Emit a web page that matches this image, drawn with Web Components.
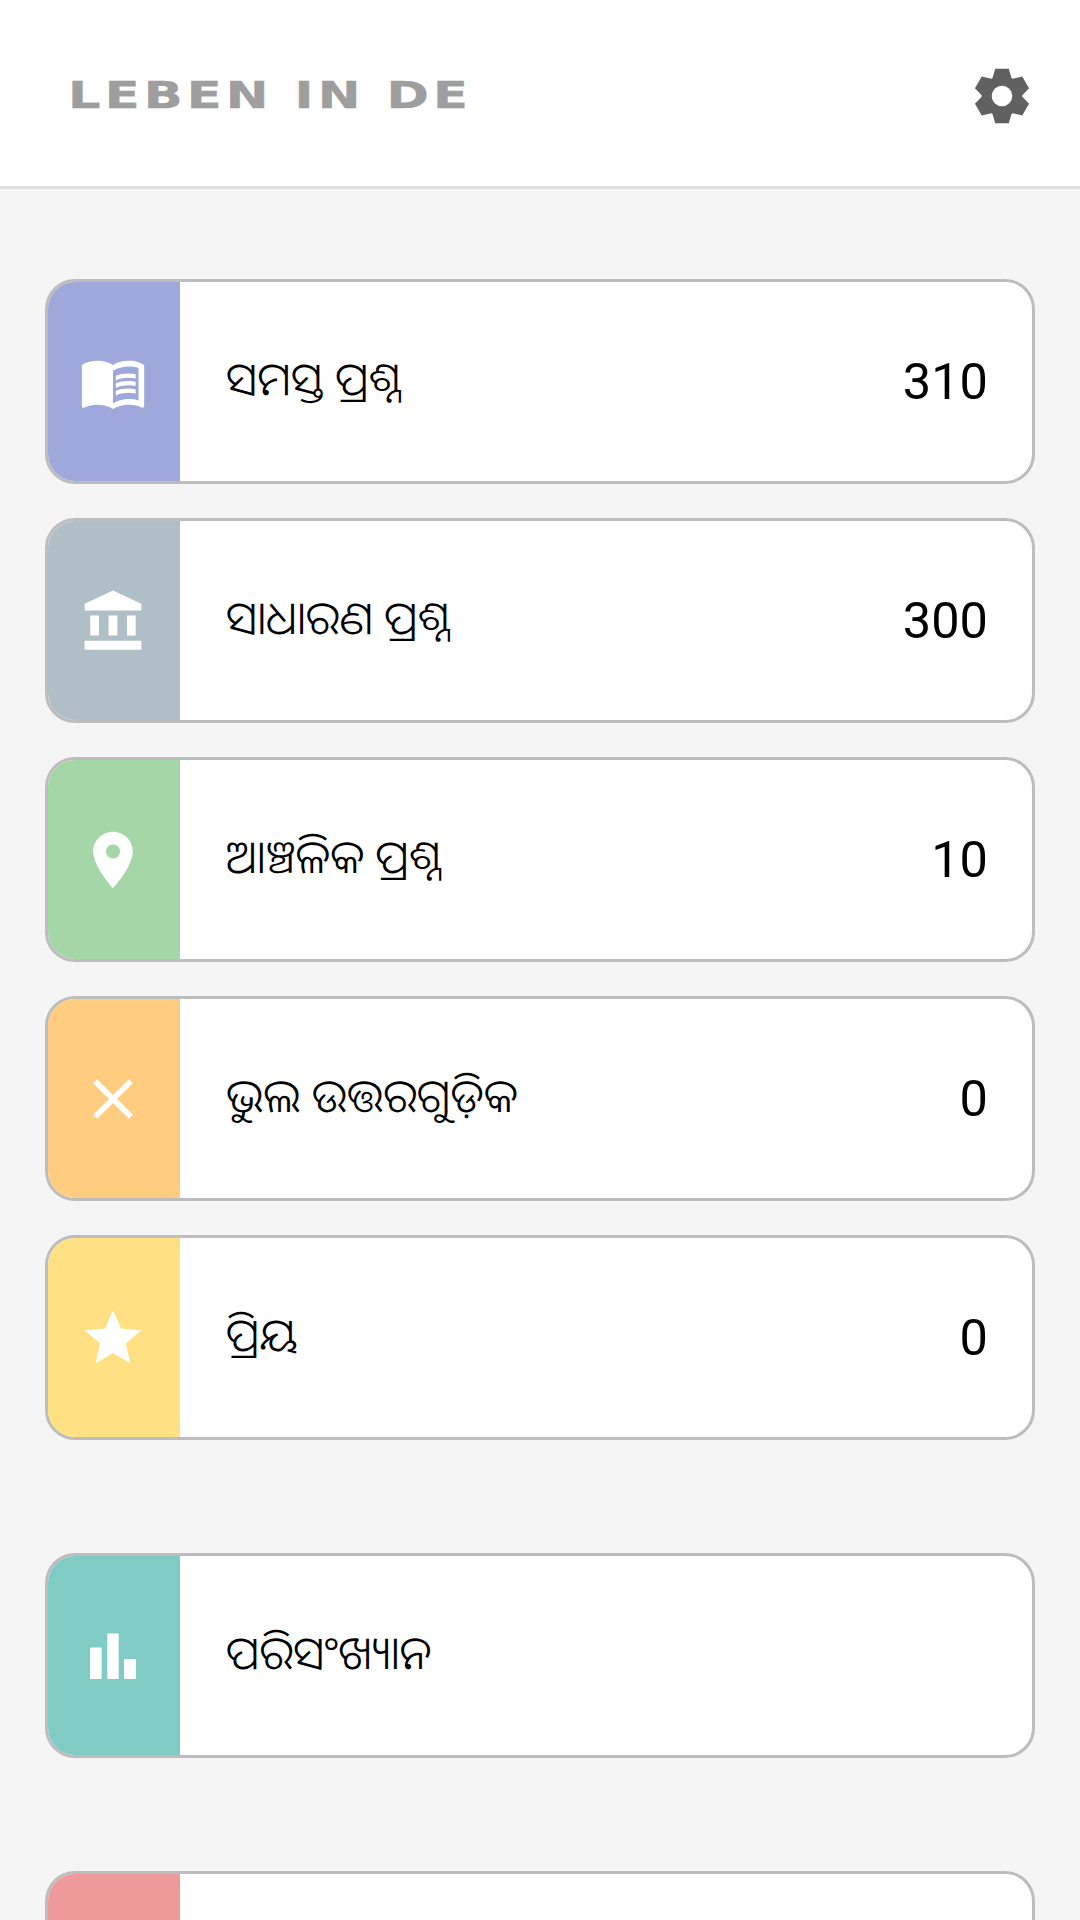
<!DOCTYPE html>
<html lang="or">
<head>
<meta charset="utf-8">
<title>Leben in DE</title>
<style>
  html, body { margin: 0; padding: 0; background: #f5f5f5; }
  body { font-family: Roboto, "Noto Sans", "Noto Sans Oriya", "Lohit Odia", sans-serif; height: 1920px; overflow: hidden; }
</style>
</head>
<body>
<app-header title="LEBEN IN DE"></app-header>
<menu-list>
  <menu-group>
    <menu-card color="#9fa8da" label="ସମସ୍ତ ପ୍ରଶ୍ନ" count="310"><menu-icon name="book"></menu-icon></menu-card>
    <menu-card color="#b0bec5" label="ସାଧାରଣ ପ୍ରଶ୍ନ" count="300"><menu-icon name="bank"></menu-icon></menu-card>
    <menu-card color="#a5d6a7" label="ଆଞ୍ଚଳିକ ପ୍ରଶ୍ନ" count="10"><menu-icon name="pin"></menu-icon></menu-card>
    <menu-card color="#ffcc80" label="ଭୁଲ ଉତ୍ତରଗୁଡ଼ିକ" count="0"><menu-icon name="close"></menu-icon></menu-card>
    <menu-card color="#ffe082" label="ପ୍ରିୟ" count="0"><menu-icon name="star"></menu-icon></menu-card>
  </menu-group>
  <menu-group>
    <menu-card color="#80cbc4" label="ପରିସଂଖ୍ୟାନ"><menu-icon name="bars"></menu-icon></menu-card>
  </menu-group>
  <menu-group>
    <menu-card color="#ef9a9a"></menu-card>
  </menu-group>
</menu-list>

<script>
const VIEW_24 = "0 0 24 24";
const VIEW_PX = "-34 -34 68 68";

const ICONS = {
  book: [VIEW_24, "M21 5c-1.11-.35-2.33-.5-3.5-.5-1.95 0-4.05.4-5.5 1.5-1.45-1.1-3.55-1.5-5.5-1.5S2.45 4.9 1 6v14.65c0 .25.25.5.5.5.1 0 .15-.05.25-.05C3.1 20.45 5.05 20 6.5 20c1.95 0 4.05.4 5.5 1.5 1.35-.85 3.8-1.5 5.5-1.5 1.65 0 3.35.3 4.75 1.05.1.05.15.05.25.05.25 0 .5-.25.5-.5V6c-.6-.45-1.25-.75-2-1zm0 13.5c-1.1-.35-2.3-.5-3.5-.5-1.7 0-4.15.65-5.5 1.5V8c1.35-.85 3.8-1.5 5.5-1.5 1.2 0 2.4.15 3.5.5v11.5zM17.5 10.5c.88 0 1.73.09 2.5.26V9.24c-.79-.15-1.64-.24-2.5-.24-1.7 0-3.24.29-4.5.83v1.66c1.13-.64 2.7-.99 4.5-.99zM13 12.49v1.66c1.13-.64 2.7-.99 4.5-.99.88 0 1.73.09 2.5.26V11.9c-.79-.15-1.64-.24-2.5-.24-1.7 0-3.24.3-4.5.83zM17.5 14.33c-1.7 0-3.24.29-4.5.83v1.66c1.13-.64 2.7-.99 4.5-.99.88 0 1.73.09 2.5.26v-1.52c-.79-.16-1.64-.24-2.5-.24z"],
  bank: [VIEW_PX, "M0 -30.5L-28.4 -17.2V-10.5H28.4V-17.2ZM-22.7 -5.5H-14V14.5H-22.7ZM-4.4 -5.5H4.4V14.5H-4.4ZM14 -5.5H22.7V14.5H14ZM-28.4 19.8H28.4V28.8H-28.4Z"],
  pin: [VIEW_24, "M12 2C8.13 2 5 5.13 5 9c0 5.25 7 13 7 13s7-7.75 7-13c0-3.87-3.13-7-7-7zm0 9.5a2.5 2.5 0 010-5 2.5 2.5 0 010 5z"],
  close: [VIEW_24, "M19 6.41L17.59 5 12 10.59 6.41 5 5 6.41 10.59 12 5 17.59 6.41 19 12 13.41 17.59 19 19 17.59 13.41 12z"],
  star: [VIEW_24, "M12 17.27L18.18 21l-1.64-7.03L22 9.24l-7.19-.61L12 2 9.19 8.63 2 9.24l5.46 4.73L5.82 21z"],
  bars: [VIEW_PX, "M-23 -8.5H-11.3V23H-23ZM-5.7 -22.5H5.7V23H-5.7ZM11 3H23V23H11Z"]
};

/**
 * Returns the path of the six toothed settings gear, centered on 0,0.
 */
function gearPath() {
  const points = [];
  for (let i = 0; i < 6; i++) {
    const a = (i * 60 - 90) * Math.PI / 180;
    const teeth = [[18, -9.5], [27.3, -6.8], [27.3, 6.8], [18, 9.5]];
    for (const [r, t] of teeth) {
      const x = r * Math.cos(a) - t * Math.sin(a);
      const y = r * Math.sin(a) + t * Math.cos(a);
      points.push(`${x.toFixed(2)} ${y.toFixed(2)}`);
    }
  }
  return `M${points.join("L")}Z M10.3 0a10.3 10.3 0 1 0 -20.6 0a10.3 10.3 0 1 0 20.6 0Z`;
}

class AppHeader extends HTMLElement {
  constructor() {
    super();
    const shadow = this.attachShadow({ mode: "open" });
    shadow.innerHTML = `
      <style>
        :host {
          display: flex;
          align-items: center;
          justify-content: space-between;
          box-sizing: border-box;
          height: 189px;
          padding: 5px 50px 0 68px;
          background: #fff;
          border-bottom: 3px solid #e0e0e0;
        }
        .logo {
          font: bold 37px "DejaVu Sans", sans-serif;
          color: #9e9e9e;
          -webkit-text-stroke: 0.4px #9e9e9e;
          white-space: nowrap;
          letter-spacing: 3px;
          transform: scaleX(1.38);
          transform-origin: left center;
        }
        svg { display: block; fill: #616161; fill-rule: evenodd; }
      </style>
      <div class="logo"></div>
      <svg width="56" height="56" viewBox="-28 -28 56 56"><path d="${gearPath()}"/></svg>
    `;
    shadow.querySelector(".logo").textContent = this.getAttribute("title");
  }
}

class MenuList extends HTMLElement {
  constructor() {
    super();
    this.attachShadow({ mode: "open" }).innerHTML = `
      <style>
        :host {
          display: flex;
          flex-direction: column;
          gap: 113px;
          padding: 90px 45px 0;
        }
      </style>
      <slot></slot>
    `;
  }
}

class MenuGroup extends HTMLElement {
  constructor() {
    super();
    this.attachShadow({ mode: "open" }).innerHTML = `
      <style>
        :host { display: flex; flex-direction: column; gap: 34px; }
      </style>
      <slot></slot>
    `;
  }
}

class MenuCard extends HTMLElement {
  constructor() {
    super();
    const shadow = this.attachShadow({ mode: "open" });
    shadow.innerHTML = `
      <style>
        :host {
          display: flex;
          box-sizing: border-box;
          height: 205px;
          background: #fff;
          border: 3px solid #bdbdbd;
          border-radius: 30px;
          overflow: hidden;
        }
        .icon {
          flex: none;
          display: flex;
          align-items: center;
          justify-content: center;
          box-sizing: border-box;
          width: 132px;
          padding-right: 2px;
          background: var(--card-color);
        }
        .body {
          flex: 1;
          display: flex;
          align-items: center;
          justify-content: space-between;
          padding: 0 44px 0 46px;
          color: #000;
        }
        .label { font-size: 46px; font-weight: 300; padding-bottom: 9px; }
        .count { font-size: 50.5px; }
      </style>
      <div class="icon"><slot></slot></div>
      <div class="body">
        <span class="label"></span>
        <span class="count"></span>
      </div>
    `;
    shadow.querySelector(".icon").style.setProperty("--card-color", this.getAttribute("color"));
    shadow.querySelector(".label").textContent = this.getAttribute("label") || "";
    shadow.querySelector(".count").textContent = this.getAttribute("count") || "";
  }
}

class MenuIcon extends HTMLElement {
  constructor() {
    super();
    const [view, d] = ICONS[this.getAttribute("name")];
    this.attachShadow({ mode: "open" }).innerHTML = `
      <style>
        :host { display: block; }
        svg { display: block; fill: #fff; overflow: visible; }
      </style>
      <svg width="68" height="68" viewBox="${view}"><path d="${d}"/></svg>
    `;
  }
}

customElements.define("app-header", AppHeader);
customElements.define("menu-list", MenuList);
customElements.define("menu-group", MenuGroup);
customElements.define("menu-card", MenuCard);
customElements.define("menu-icon", MenuIcon);
</script>
</body>
</html>
